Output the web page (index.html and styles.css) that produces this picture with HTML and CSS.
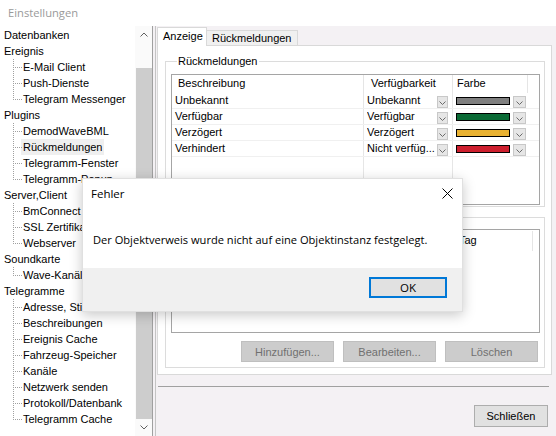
FILE: index.html
```html
<!DOCTYPE html>
<html lang="de">
<head>
<meta charset="utf-8">
<title>Einstellungen</title>
<link rel="stylesheet" href="styles.css">
</head>
<body>
<div class="win">
  <div class="titlebar">Einstellungen</div>
  <div class="main">
    <div class="tree">
      <div class="tree-items">
        <div class="node">Datenbanken</div>
        <div class="node">Ereignis</div>
        <div class="leaf">E-Mail Client</div>
        <div class="leaf">Push-Dienste</div>
        <div class="leaf last">Telegram Messenger</div>
        <div class="node">Plugins</div>
        <div class="leaf">DemodWaveBML</div>
        <div class="leaf"><span class="sel">Rückmeldungen</span></div>
        <div class="leaf">Telegramm-Fenster</div>
        <div class="leaf last">Telegramm-Popup</div>
        <div class="node">Server,Client</div>
        <div class="leaf">BmConnect</div>
        <div class="leaf">SSL Zertifikat</div>
        <div class="leaf last">Webserver</div>
        <div class="node">Soundkarte</div>
        <div class="leaf last">Wave-Kanäle</div>
        <div class="node">Telegramme</div>
        <div class="leaf">Adresse, Stichwörter</div>
        <div class="leaf">Beschreibungen</div>
        <div class="leaf">Ereignis Cache</div>
        <div class="leaf">Fahrzeug-Speicher</div>
        <div class="leaf">Kanäle</div>
        <div class="leaf">Netzwerk senden</div>
        <div class="leaf">Protokoll/Datenbank</div>
        <div class="leaf last">Telegramm Cache</div>
      </div>
      <div class="vscroll">
        <div class="sb-arrow"><svg width="8" height="5" viewBox="0 0 8 5"><path d="M0.5 4.5 L4 1 L7.5 4.5" fill="none" stroke="#606060" stroke-width="1"/></svg></div>
        <div class="sb-track"><div class="sb-thumb"></div></div>
        <div class="sb-arrow"><svg width="8" height="5" viewBox="0 0 8 5"><path d="M0.5 0.5 L4 4 L7.5 0.5" fill="none" stroke="#606060" stroke-width="1"/></svg></div>
      </div>
    </div>
    <div class="pane">
      <div class="tabs">
        <div class="tab active">Anzeige</div>
        <div class="tab">Rückmeldungen</div>
      </div>
      <div class="page">
        <fieldset class="group g1">
          <legend>Rückmeldungen</legend>
          <div class="list l1">
            <div class="lv-head">
              <div class="hc c1">Beschreibung</div>
              <div class="hc c2">Verfügbarkeit</div>
              <div class="hc c3">Farbe</div>
              <div class="hc c4"></div>
            </div>
            <div class="lv-row">
              <div class="cell c1">Unbekannt</div>
              <div class="cell c2"><span class="ctext">Unbekannt</span><span class="dd"><svg width="7" height="4" viewBox="0 0 7 4"><path d="M0.5 0.5 L3.5 3.5 L6.5 0.5" fill="none" stroke="#6a6a6a" stroke-width="1"/></svg></span></div>
              <div class="cell c3"><span class="swatch sw-gray"></span><span class="dd"><svg width="7" height="4" viewBox="0 0 7 4"><path d="M0.5 0.5 L3.5 3.5 L6.5 0.5" fill="none" stroke="#6a6a6a" stroke-width="1"/></svg></span></div>
            </div>
            <div class="lv-row">
              <div class="cell c1">Verfügbar</div>
              <div class="cell c2"><span class="ctext">Verfügbar</span><span class="dd"><svg width="7" height="4" viewBox="0 0 7 4"><path d="M0.5 0.5 L3.5 3.5 L6.5 0.5" fill="none" stroke="#6a6a6a" stroke-width="1"/></svg></span></div>
              <div class="cell c3"><span class="swatch sw-green"></span><span class="dd"><svg width="7" height="4" viewBox="0 0 7 4"><path d="M0.5 0.5 L3.5 3.5 L6.5 0.5" fill="none" stroke="#6a6a6a" stroke-width="1"/></svg></span></div>
            </div>
            <div class="lv-row">
              <div class="cell c1">Verzögert</div>
              <div class="cell c2"><span class="ctext">Verzögert</span><span class="dd"><svg width="7" height="4" viewBox="0 0 7 4"><path d="M0.5 0.5 L3.5 3.5 L6.5 0.5" fill="none" stroke="#6a6a6a" stroke-width="1"/></svg></span></div>
              <div class="cell c3"><span class="swatch sw-yellow"></span><span class="dd"><svg width="7" height="4" viewBox="0 0 7 4"><path d="M0.5 0.5 L3.5 3.5 L6.5 0.5" fill="none" stroke="#6a6a6a" stroke-width="1"/></svg></span></div>
            </div>
            <div class="lv-row">
              <div class="cell c1">Verhindert</div>
              <div class="cell c2"><span class="ctext">Nicht verfüg...</span><span class="dd"><svg width="7" height="4" viewBox="0 0 7 4"><path d="M0.5 0.5 L3.5 3.5 L6.5 0.5" fill="none" stroke="#6a6a6a" stroke-width="1"/></svg></span></div>
              <div class="cell c3"><span class="swatch sw-red"></span><span class="dd"><svg width="7" height="4" viewBox="0 0 7 4"><path d="M0.5 0.5 L3.5 3.5 L6.5 0.5" fill="none" stroke="#6a6a6a" stroke-width="1"/></svg></span></div>
            </div>
          </div>
        </fieldset>
        <fieldset class="group g2">
          <div class="list l2">
            <div class="lv2-head">
              <div class="h2c h2a"></div>
              <div class="h2c h2b">Tag</div>
            </div>
          </div>
          <div class="btnrow">
            <button class="btn disabled">Hinzufügen...</button>
            <button class="btn disabled">Bearbeiten...</button>
            <button class="btn disabled">Löschen</button>
          </div>
        </fieldset>
      </div>
      <div class="sep"></div>
      <div class="footer">
        <button class="btn close">Schließen</button>
      </div>
    </div>
  </div>

  <div class="dialog">
    <div class="dlg-title">
      <span>Fehler</span>
      <svg class="dlg-x" width="11" height="11" viewBox="0 0 11 11"><path d="M0.5 0.5 L10.5 10.5 M10.5 0.5 L0.5 10.5" stroke="#000" stroke-width="1" fill="none"/></svg>
    </div>
    <div class="dlg-body">Der Objektverweis wurde nicht auf eine Objektinstanz festgelegt.</div>
    <div class="dlg-foot">
      <button class="ok">OK</button>
    </div>
  </div>
</div>
</body>
</html>
```

FILE: styles.css
```css
* { box-sizing: border-box; }

html, body {
  margin: 0;
  padding: 0;
}

body {
  width: 556px;
  height: 436px;
  overflow: hidden;
  background: #f4f1f4;
  font-family: "Liberation Sans", Arial, sans-serif;
  font-size: 11px;
  color: #000;
}

.win {
  position: relative;
  width: 556px;
  height: 436px;
  display: flex;
  flex-direction: column;
}

.titlebar {
  height: 26px;
  flex: none;
  background: #fff;
  padding-left: 8px;
  font-family: "Open Sans", "Noto Sans", sans-serif;
  font-size: 11.2px;
  line-height: 25px;
  color: #9a9a9a;
}

.main {
  flex: 1;
  display: flex;
  min-height: 0;
}

/* ---------- Tree ---------- */
.tree {
  width: 153px;
  flex: none;
  background: #fff;
  border-right: 1px solid #a0a0a0;
  display: flex;
}

.tree-items {
  flex: 1;
  overflow: hidden;
  padding-top: 1px;
  white-space: nowrap;
}

.node, .leaf {
  height: 16px;
  line-height: 16px;
}

.node { padding-left: 4px; }

.leaf {
  position: relative;
  padding-left: 23px;
}

.leaf::before {
  content: "";
  position: absolute;
  left: 13px;
  top: 0;
  width: 1px;
  height: 16px;
  background: repeating-linear-gradient(to bottom, #a0a0a0 0 1px, transparent 1px 2px);
}

.leaf.last::before { height: 9px; }

.leaf::after {
  content: "";
  position: absolute;
  left: 15px;
  top: 8px;
  width: 7px;
  height: 1px;
  background: repeating-linear-gradient(to right, #a0a0a0 0 1px, transparent 1px 2px);
}

.sel {
  margin-left: -2px;
  padding: 2px 1px 2px 2px;
  background: #efefef;
}

.vscroll {
  width: 17px;
  flex: none;
  display: flex;
  flex-direction: column;
  background: #fafafa;
}

.sb-arrow {
  height: 17px;
  flex: none;
  display: flex;
  align-items: center;
  justify-content: center;
}

.sb-track {
  flex: 1;
  padding: 25px 0 0 1px;
  display: flex;
}

.sb-thumb {
  flex: 1;
  background: #cdcdcd;
}

/* ---------- Right pane ---------- */
.pane {
  flex: 1;
  margin-left: 2px;
  border-left: 1px solid #c4c4c4;
  padding: 2px 4px 0 1px;
  display: flex;
  flex-direction: column;
}

.tabs {
  height: 18px;
  flex: none;
  display: flex;
  align-items: flex-end;
  margin-bottom: -1px;
}

.tab {
  height: 16px;
  padding: 0 5px;
  border: 1px solid #d9d9d9;
  border-bottom: none;
  background: #f0f0f0;
  line-height: 15px;
  margin-left: -1px;
}

.tab.active {
  position: relative;
  height: 19px;
  margin-left: 0;
  padding: 0 5px 0 5px;
  background: #fff;
  line-height: 17px;
  z-index: 1;
  width: 50px;
}

.page {
  height: 330px;
  flex: none;
  background: #fff;
  border: 1px solid #d9d9d9;
  padding: 0 6px 0 7px;
}

.group {
  margin: 0;
  border: 1px solid #dcdcdc;
  padding: 0;
  min-width: 0;
  width: 380px;
}

.g1 {
  margin-top: 9px;
  padding: 6px 4px 1px 5px;
}

.g1 legend {
  margin-left: 6px;
  padding: 0 1px;
  line-height: 13px;
  font-size: 11px;
}

.g2 {
  margin-top: 10px;
  padding: 11px 4px 5px 5px;
}

.list {
  background: #fff;
  border: 1px solid #a5a5a5;
}

.l1 {
  height: 131px;
  background-image:
    linear-gradient(#e6e6e6, #e6e6e6),
    linear-gradient(#e6e6e6, #e6e6e6);
  background-size: 1px 100%, 1px 100%;
  background-position: 191px 0, 280px 0;
  background-repeat: no-repeat;
}

.lv-head, .lv-row {
  display: grid;
  grid-template-columns: 192px 89px 75px 1fr;
}

.lv-head {
  height: 18px;
  line-height: 17px;
  background: #fff;
}

.hc {
  border-right: 1px solid #e5e5e5;
  white-space: nowrap;
  overflow: hidden;
}

.hc.c4 { border-right: none; }
.hc.c1 { padding-left: 6px; }
.hc.c2 { padding-left: 7px; }
.hc.c3 { padding-left: 4px; }

.lv-row {
  height: 16px;
  border-bottom: 1px solid #f0f0f0;
}

.cell {
  display: flex;
  align-items: center;
  white-space: nowrap;
  overflow: hidden;
  line-height: 15px;
}

.cell.c1 { padding-left: 3px; }

.cell.c2 {
  padding: 0 5px 0 3px;
}

.ctext {
  flex: 1;
  overflow: hidden;
  white-space: nowrap;
}

.cell.c3 { padding-left: 3px; }

.dd {
  width: 11px;
  height: 12px;
  flex: none;
  margin-top: 3px;
  background: #e6e6e6;
  border: 1px solid #c8c8c8;
  display: flex;
  align-items: flex-end;
  justify-content: center;
  padding-bottom: 2px;
}

.c3 .dd {
  width: 13px;
  margin-left: 3px;
}

.swatch {
  width: 54px;
  height: 8px;
  flex: none;
  border: 1px solid #000;
}

.sw-gray { background: #7f7f7f; }
.sw-green { background: #0b6b36; }
.sw-yellow { background: #e9b232; }
.sw-red { background: #cd1f2e; }

.l2 {
  height: 104px;
}

.lv2-head {
  display: grid;
  grid-template-columns: 281px 80px;
  height: 22px;
  line-height: 21px;
}

.h2c {
  white-space: nowrap;
  overflow: hidden;
  padding-left: 6px;
}

.h2b {
  padding-left: 6px;
  border-right: 1px solid #e5e5e5;
  margin: 1px 0;
  line-height: 19px;
}

.btnrow {
  display: flex;
  justify-content: flex-end;
  gap: 9px;
  margin-top: 8px;
  padding-right: 2px;
}

.btn {
  font-family: "Liberation Sans", Arial, sans-serif;
  font-size: 11px;
  margin: 0;
  padding: 0;
  height: 21px;
  width: 93px;
  background: #e1e1e1;
  border: 1px solid #adadad;
  color: #000;
}

.btn.disabled {
  background: #cccccc;
  border-color: #bfbfbf;
  color: #707070;
}

.sep {
  height: 1px;
  flex: none;
  margin: 11px 3px 0 1px;
  background: #a0a0a0;
}

.footer {
  display: flex;
  justify-content: flex-end;
  padding: 18px 4px 0 0;
}

.btn.close {
  width: 74px;
  height: 22px;
}

/* ---------- Dialog ---------- */
.dialog {
  position: absolute;
  left: 82px;
  top: 178px;
  width: 381px;
  height: 134px;
  background: #fff;
  border: 1px solid rgba(0, 0, 0, 0.12);
  box-shadow: 0 3px 12px rgba(0, 0, 0, 0.22);
  display: flex;
  flex-direction: column;
  font-family: "Open Sans", "Noto Sans", sans-serif;
  font-size: 11.1px;
  color: #000;
}

.dlg-title {
  height: 31px;
  flex: none;
  display: flex;
  align-items: center;
  justify-content: space-between;
  padding: 0 9px 2px 8px;
  font-size: 11.5px;
}

.dlg-body {
  flex: 1;
  display: flex;
  align-items: center;
  padding: 0 0 0 10px;
  white-space: nowrap;
}

.dlg-foot {
  height: 43px;
  flex: none;
  background: #f0f0f0;
  display: flex;
  justify-content: flex-end;
  align-items: flex-start;
  padding: 9px 15px 0 0;
}

.ok {
  width: 78px;
  height: 21px;
  margin: 0;
  padding: 0;
  background: #e1e1e1;
  border: 2px solid #0078d7;
  font-family: "Open Sans", "Noto Sans", sans-serif;
  font-size: 11.5px;
  color: #000;
  line-height: 15px;
}
```
